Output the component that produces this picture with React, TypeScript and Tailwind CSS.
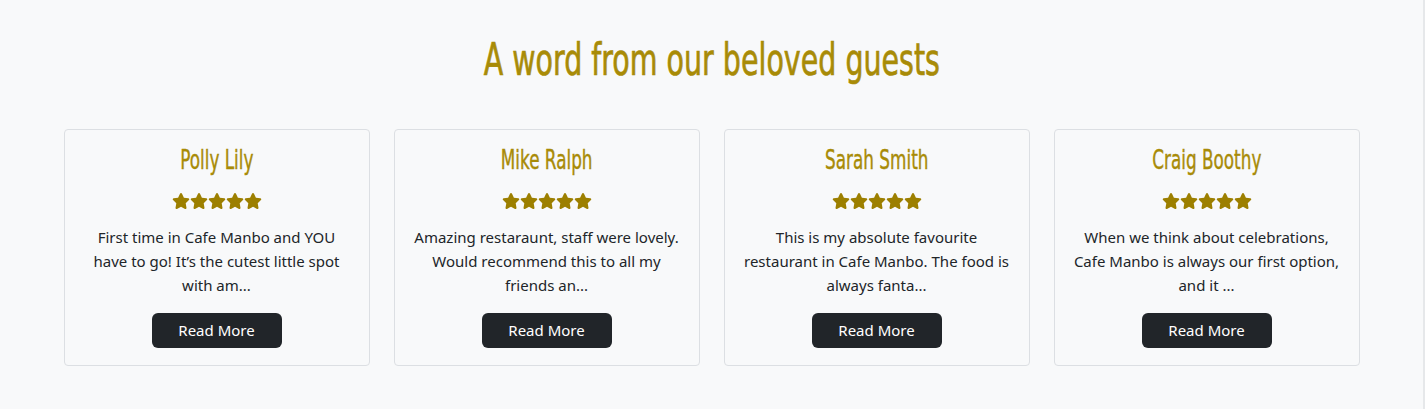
import React from "react";

const STAR =
  "M316.9 18C311.6 7 300.4 0 288.1 0s-23.4 7-28.8 18L195 150.3 51.4 171.5c-12 1.8-22 10.2-25.7 21.7s-.7 24.2 7.9 32.7L137.8 329 113.2 474.7c-2 12 3 24.2 12.9 31.3s23 8 33.8 2.3l128.3-68.5 128.3 68.5c10.8 5.7 23.9 4.9 33.8-2.3s14.9-19.3 12.9-31.3L438.5 329 542.7 225.9c8.6-8.5 11.7-21.2 7.9-32.7s-13.7-19.9-25.7-21.7L381.2 150.3 316.9 18z";

function Star() {
  return (
    <svg viewBox="0 0 576 512" width="18" height="16" className="text-[#9c7f00]" fill="currentColor">
      <path d={STAR} />
    </svg>
  );
}

const reviews = [
  { name: "Polly Lily", lines: ["First time in Cafe Manbo and YOU", "have to go! It\u2019s the cutest little spot", "with am..."] },
  { name: "Mike Ralph", lines: ["Amazing restaraunt, staff were lovely.", "Would recommend this to all my", "friends an..."] },
  { name: "Sarah Smith", lines: ["This is my absolute favourite", "restaurant in Cafe Manbo. The food is", "always fanta..."] },
  { name: "Craig Boothy", lines: ["When we think about celebrations,", "Cafe Manbo is always our first option,", "and it ..."] },
];

const heading = { fontFamily: '"DejaVu Sans Condensed", "DejaVu Sans", sans-serif' };

export default function App() {
  return (
    <div className="flex w-[1425px] h-[409px] bg-[#f8f9fa]" style={{ fontFamily: '"Noto Sans", "Open Sans", sans-serif' }}>
      <div className="flex-1 flex flex-col items-center pt-[36px]">
        <h2 className="text-[44px] leading-[48px] text-[#a88b07] scale-x-[0.72] whitespace-nowrap [-webkit-text-stroke:0.7px_#a88b07]" style={heading}>
          A word from our beloved guests
        </h2>
        <div className="mt-[45px] grid grid-cols-4 gap-6 w-[1296px]">
          {reviews.map((r) => (
            <div key={r.name} className="border border-[#dcdfe3] rounded-[4px] px-4 pt-4 pb-[17px] flex flex-col items-center">
              <h3 className="text-[26px] leading-[29px] text-[#a88b07] scale-x-[0.72] whitespace-nowrap [-webkit-text-stroke:0.4px_#a88b07]" style={heading}>
                {r.name}
              </h3>
              <div className="flex mt-[18px] h-[16px]">
                {[0, 1, 2, 3, 4].map((i) => (
                  <Star key={i} />
                ))}
              </div>
              <p className="mt-[16px] text-[15px] leading-[24px] text-[#212529] text-center">
                {r.lines.map((l, i) => (
                  <span key={i} className="block whitespace-nowrap">
                    {l}
                  </span>
                ))}
              </p>
              <button className="mt-[16px] w-[130px] h-[35px] rounded-[6px] bg-[#212529] text-white text-[15px]">
                Read More
              </button>
            </div>
          ))}
        </div>
      </div>
      <div className="w-[2px] bg-[#e6e8ea]" />
    </div>
  );
}
